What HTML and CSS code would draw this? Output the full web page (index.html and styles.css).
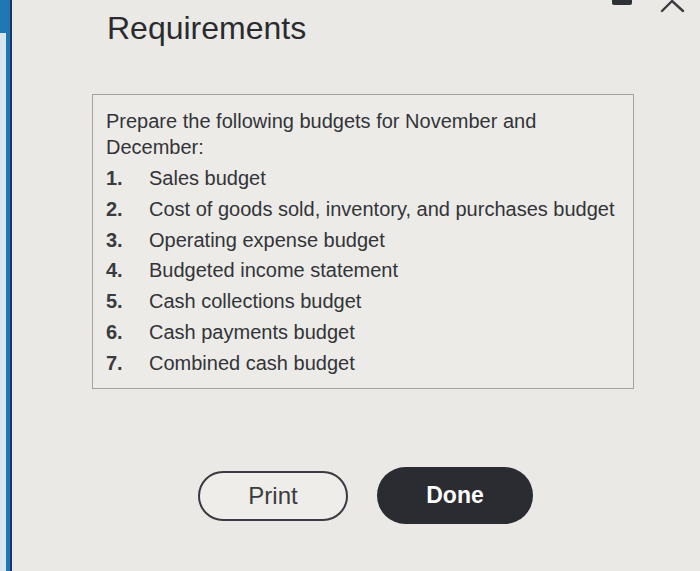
FILE: index.html
```html
<!DOCTYPE html>
<html lang="en">
<head>
<meta charset="utf-8">
<title>Requirements</title>
<link rel="stylesheet" href="styles.css">
</head>
<body>
<div class="page">
  <div class="strip"><div class="strip-top"></div><div class="strip-inner"></div></div>
  <main class="main">
    <h1 class="title">Requirements</h1>
    <section class="box">
      <p class="intro">Prepare the following budgets for November and December:</p>
      <ol class="list">
        <li><span class="num">1.</span><span>Sales budget</span></li>
        <li><span class="num">2.</span><span>Cost of goods sold, inventory, and purchases budget</span></li>
        <li><span class="num">3.</span><span>Operating expense budget</span></li>
        <li><span class="num">4.</span><span>Budgeted income statement</span></li>
        <li><span class="num">5.</span><span>Cash collections budget</span></li>
        <li><span class="num">6.</span><span>Cash payments budget</span></li>
        <li><span class="num">7.</span><span>Combined cash budget</span></li>
      </ol>
    </section>
    <div class="actions">
      <button class="btn btn-print">Print</button>
      <button class="btn btn-done">Done</button>
    </div>
  </main>
  <svg class="chrome" width="100" height="20" viewBox="0 0 100 20" aria-hidden="true">
    <rect x="12" y="-4" width="20" height="9" rx="2" fill="#2f3136"/>
    <path d="M62 11 L72 1 L83 11" fill="none" stroke="#3a3c40" stroke-width="2.4" stroke-linecap="round" stroke-linejoin="round"/>
  </svg>
</div>
</body>
</html>
```

FILE: styles.css
```css
html, body {
  margin: 0;
  padding: 0;
  background: #eae9e5;
}

.page {
  position: relative;
  display: flex;
  width: 700px;
  height: 571px;
  overflow: hidden;
  font-family: "Liberation Sans", Arial, sans-serif;
  color: #333438;
}

.strip {
  position: relative;
  width: 12px;
  flex: none;
  background: #1f78b3;
  border-right: 2px solid #1d3566;
  box-sizing: border-box;
  display: flex;
  flex-direction: column;
}

.strip-top {
  height: 33px;
}

.strip-inner {
  flex: 1;
  width: 6px;
  background: #d9e6ee;
}

.main {
  flex: 1;
  padding-left: 80px;
  display: flex;
  flex-direction: column;
  align-items: flex-start;
}

.title {
  margin: 10px 0 0 15px;
  font-size: 32px;
  line-height: 36px;
  font-weight: 400;
  color: #2a2b2f;
}

.box {
  margin-top: 48px;
  width: 542px;
  height: 295px;
  box-sizing: border-box;
  border: 1.5px solid #a2a2a0;
  background: #ecebe8;
  padding: 13px 10px 0 13px;
  font-size: 20px;
}

.intro {
  margin: 0;
  line-height: 26px;
  width: 440px;
}

.list {
  list-style: none;
  margin: 3px 0 0 0;
  padding: 0;
}

.list li {
  display: flex;
  line-height: 30.8px;
}

.num {
  width: 43px;
  flex: none;
  font-weight: 700;
  color: #3a3b3f;
}

.actions {
  margin-top: 78px;
  margin-left: 106px;
  display: flex;
  align-items: center;
  gap: 29px;
}

.btn {
  font-family: "Liberation Sans", Arial, sans-serif;
  border-radius: 999px;
  box-sizing: border-box;
  padding: 0;
  cursor: pointer;
}

.btn-print {
  width: 150px;
  height: 50px;
  border: 2.5px solid #3a3b40;
  background: #eeede9;
  color: #3b3c40;
  font-size: 24px;
}

.btn-done {
  width: 156px;
  height: 57px;
  border: none;
  background: #2a2c32;
  color: #ffffff;
  font-size: 23px;
  font-weight: 700;
}

.chrome {
  position: absolute;
  top: 0;
  left: 600px;
}
```
